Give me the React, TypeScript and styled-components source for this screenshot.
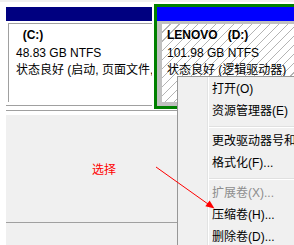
import React from 'react';
import styled, { createGlobalStyle } from 'styled-components';

const GlobalStyle = createGlobalStyle`
  html, body {
    margin: 0;
    padding: 0;
    overflow: hidden;
    background: #ffffff;
  }
  body {
    font-family: "Liberation Sans", "Noto Sans CJK SC", sans-serif;
    font-size: 12px;
    color: #000;
  }
`;

const Page = styled.div`
  position: relative;
  width: 294px;
  height: 245px;
  overflow: hidden;
  display: flex;
  flex-direction: column;
  background: #ffffff;
`;

const TopStrip = styled.div`
  height: 2px;
  background: #f0f0f0;
`;

const DiskRow = styled.div`
  display: flex;
  align-items: flex-start;
  gap: 2px;
  margin-left: 6px;
  height: 108px;
  border-bottom: 1px solid #a0a0a0;
`;

const Partition = styled.div`
  flex: 0 0 146px;
  min-width: 0;
  overflow: hidden;
  margin-top: 5px;
  border-bottom: 1px solid #a0a0a0;
  padding-bottom: 3px;
`;

const HeaderBar = styled.div<{ color: string }>`
  height: 14px;
  background: ${p => p.color};
`;

const PartBody = styled.div`
  margin: 2px 0 0 2px;
  height: 79px;
  border-left: 1px solid #a0a0a0;
  border-top: 1px solid #a0a0a0;
  padding: 3px 0 0 7px;
  box-sizing: border-box;
  overflow: hidden;
`;

const SelectedPartition = styled.div`
  flex: 0 0 180px;
  min-width: 0;
  margin-top: 2px;
  border: 3px solid #008000;
`;

const SelectedFrame = styled.div`
  height: 85px;
  box-sizing: border-box;
  padding: 3px 0 4px 5px;
  background: #c0c0c0;
`;

const Hatched = styled.div`
  height: 100%;
  padding: 3px 0 0 5px;
  box-sizing: border-box;
  overflow: hidden;
  background-color: #ffffff;
  background-image: repeating-linear-gradient(
    135deg,
    #ffffff 0px,
    #ffffff 5.6px,
    #b4b4b4 5.6px,
    #b4b4b4 6.4px
  );
`;

const InfoLine = styled.div<{ bold?: boolean }>`
  line-height: 17.5px;
  white-space: pre;
  font-weight: ${p => (p.bold ? 'bold' : 'normal')};
`;

const Gap = styled.div`
  height: 4px;
`;

const LowerArea = styled.div`
  margin-left: 6px;
  height: 107px;
  background: #f0f0f0;
  border-bottom: 1px solid #a0a0a0;
`;

const Footer = styled.div`
  flex: 1;
  margin-left: 6px;
  background: #f0f0f0;
`;

const Annotation = styled.div`
  position: absolute;
  left: 92px;
  top: 162px;
  color: #ff0000;
  font-size: 12px;
  line-height: 16px;
`;

const ArrowLayer = styled.svg`
  position: absolute;
  left: 0;
  top: 0;
  pointer-events: none;
  z-index: 2;
`;

const Menu = styled.div`
  position: absolute;
  left: 177px;
  top: 76px;
  width: 170px;
  padding: 1px 0 0 0;
  background-color: #f0f0f0;
  background-image: linear-gradient(
    to right,
    transparent 29px,
    #e2e3e3 29px,
    #e2e3e3 30px,
    #ffffff 30px,
    #ffffff 31px,
    transparent 31px
  );
  border: 1px solid #979797;
  z-index: 1;
`;

const MenuItem = styled.div<{ disabled?: boolean }>`
  height: 22px;
  line-height: 22px;
  padding-left: 34px;
  white-space: nowrap;
  color: ${p => (p.disabled ? '#8d8d8d' : '#000000')};
`;

const MenuSeparator = styled.div`
  margin: 4px 0 2px 31px;
  height: 1px;
  background: #e0e0e0;
  border-bottom: 1px solid #ffffff;
`;

const App: React.FC = () => {
  return (
    <Page>
      <GlobalStyle />
      <TopStrip />
      <DiskRow>
        <Partition>
          <HeaderBar color="#000080" />
          <PartBody>
            <InfoLine bold>{'  (C:)'}</InfoLine>
            <InfoLine>48.83 GB NTFS</InfoLine>
            <InfoLine>状态良好 (启动, 页面文件, 故障转储, 主分区)</InfoLine>
          </PartBody>
        </Partition>
        <SelectedPartition>
          <HeaderBar color="#0000ff" />
          <SelectedFrame>
            <Hatched>
              <InfoLine bold>{'LENOVO   (D:)'}</InfoLine>
              <InfoLine>101.98 GB NTFS</InfoLine>
              <InfoLine>状态良好 (逻辑驱动器)</InfoLine>
            </Hatched>
          </SelectedFrame>
        </SelectedPartition>
      </DiskRow>
      <Gap />
      <LowerArea />
      <Footer />

      <Annotation>选择</Annotation>

      <Menu>
        <MenuItem>打开(O)</MenuItem>
        <MenuItem>资源管理器(E)</MenuItem>
        <MenuSeparator />
        <MenuItem>更改驱动器号和驱动器路径(C)...</MenuItem>
        <MenuItem>格式化(F)...</MenuItem>
        <MenuSeparator />
        <MenuItem disabled>扩展卷(X)...</MenuItem>
        <MenuItem>压缩卷(H)...</MenuItem>
        <MenuItem>删除卷(D)...</MenuItem>
      </Menu>

      <ArrowLayer width="294" height="245" viewBox="0 0 294 245">
        <line x1="156" y1="167" x2="208" y2="204" stroke="#ff0000" strokeWidth="1" />
        <polygon points="214.5,208.5 205.3,206.3 209.6,200.4" fill="#ff0000" />
      </ArrowLayer>
    </Page>
  );
};

export default App;
